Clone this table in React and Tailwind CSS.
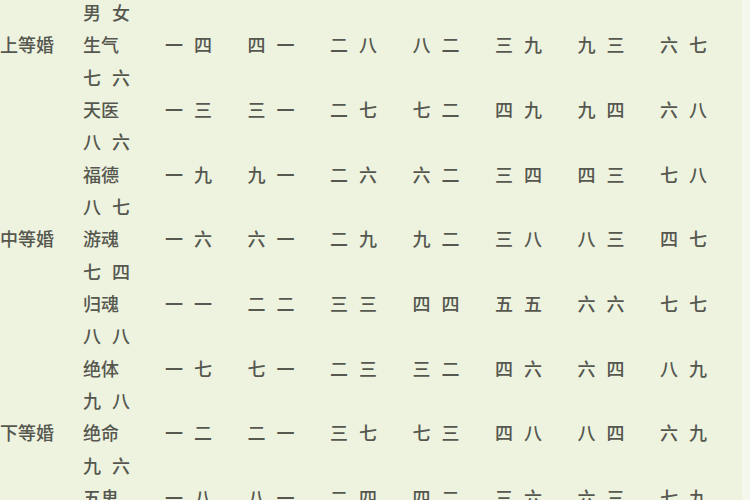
import React from "react";

// 合婚表：每组两行，上行是男女命数，下行是卦名与配对
const lines = [
  { pair: ["男", "女"] },
  { label: "上等婚", name: "生气", values: ["一四", "四一", "二八", "八二", "三九", "九三", "六七"] },
  { pair: ["七", "六"] },
  { name: "天医", values: ["一三", "三一", "二七", "七二", "四九", "九四", "六八"] },
  { pair: ["八", "六"] },
  { name: "福德", values: ["一九", "九一", "二六", "六二", "三四", "四三", "七八"] },
  { pair: ["八", "七"] },
  { label: "中等婚", name: "游魂", values: ["一六", "六一", "二九", "九二", "三八", "八三", "四七"] },
  { pair: ["七", "四"] },
  { name: "归魂", values: ["一一", "二二", "三三", "四四", "五五", "六六", "七七"] },
  { pair: ["八", "八"] },
  { name: "绝体", values: ["一七", "七一", "二三", "三二", "四六", "六四", "八九"] },
  { pair: ["九", "八"] },
  { label: "下等婚", name: "绝命", values: ["一二", "二一", "三七", "七三", "四八", "八四", "六九"] },
  { pair: ["九", "六"] },
  { name: "五鬼", values: ["一八", "八一", "二四", "四二", "三六", "六三", "七九"] },
];

const Pair = ({ chars }) => (
  <div className="flex gap-[11px]">
    <span>{chars[0]}</span>
    <span>{chars[1]}</span>
  </div>
);

const App = () => {
  return (
    <div
      className="w-[750px] h-[500px] overflow-hidden bg-[#edf3df] text-[#56574f] text-[18px] font-medium flex"
      style={{ fontFamily: '"Noto Sans CJK SC", "Noto Sans", sans-serif' }}
    >
      <div className="w-[742px] mt-[-4px]">
        {lines.map((line, i) => (
          <div
            key={i}
            className="grid grid-cols-[83px_82px_repeat(7,82.5px)] h-[32.33px] items-center leading-none"
          >
            <div className="whitespace-nowrap">{line.label || ""}</div>
            <div>{line.pair ? <Pair chars={line.pair} /> : line.name}</div>
            {(line.values || []).map((v, j) => (
              <div key={j}>
                <Pair chars={[v[0], v[1]]} />
              </div>
            ))}
          </div>
        ))}
      </div>
      <div className="flex-1 bg-[#f4f7ec]" />
    </div>
  );
};

export default App;
